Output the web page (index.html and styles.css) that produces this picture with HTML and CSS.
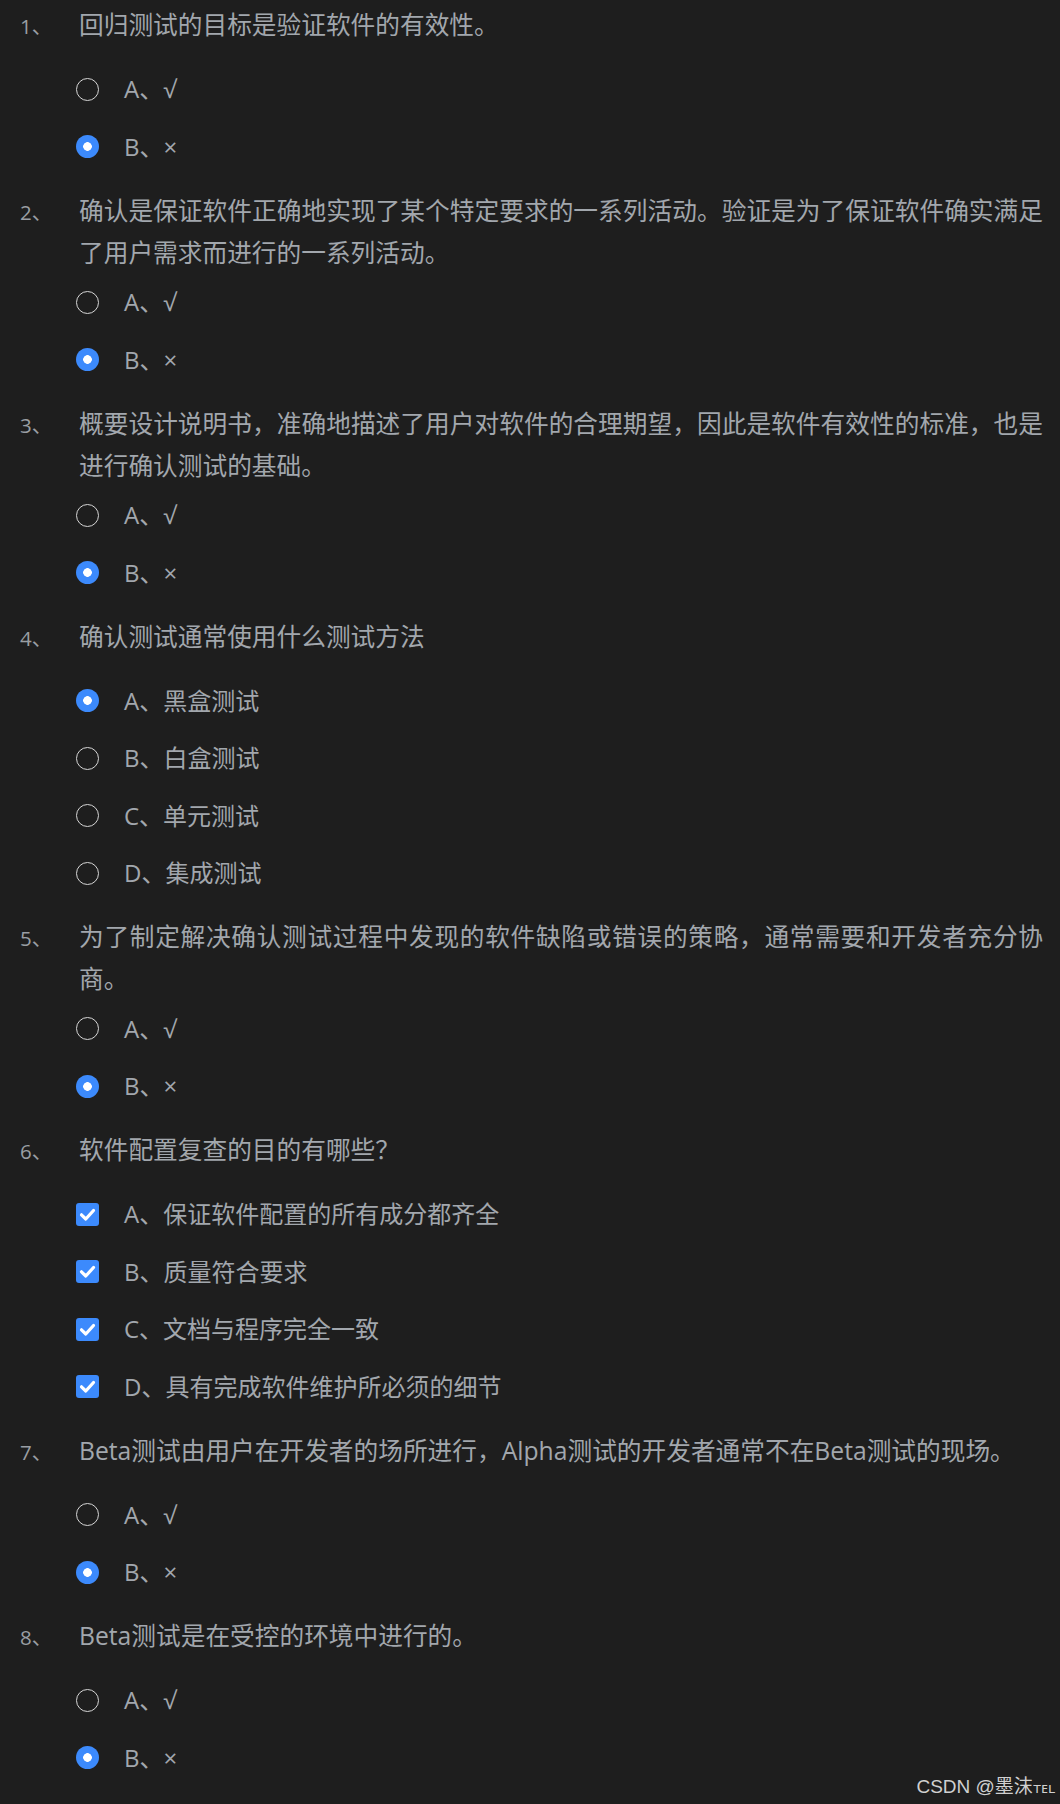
FILE: index.html
```html
<!DOCTYPE html>
<html lang="zh-CN">
<head>
<meta charset="utf-8">
<title>确认测试练习</title>
<link rel="stylesheet" href="styles.css">
</head>
<body>
<div class="quiz">
  <div class="item">
    <div class="q"><span class="num">1、</span><div class="qt">回归测试的目标是验证软件的有效性。</div></div>
    <ul class="opts">
      <li class="opt"><span class="radio"></span><span class="lbl">A、√</span></li>
      <li class="opt"><span class="radio on"></span><span class="lbl">B、×</span></li>
    </ul>
  </div>
  <div class="item">
    <div class="q"><span class="num">2、</span><div class="qt"><span class="l1">确认是保证软件正确地实现了某个特定要求的一系列活动。验证是为了保证软件确实满足</span>了用户需求而进行的一系列活动。</div></div>
    <ul class="opts">
      <li class="opt"><span class="radio"></span><span class="lbl">A、√</span></li>
      <li class="opt"><span class="radio on"></span><span class="lbl">B、×</span></li>
    </ul>
  </div>
  <div class="item">
    <div class="q"><span class="num">3、</span><div class="qt"><span class="l1">概要设计说明书，准确地描述了用户对软件的合理期望，因此是软件有效性的标准，也是</span>进行确认测试的基础。</div></div>
    <ul class="opts">
      <li class="opt"><span class="radio"></span><span class="lbl">A、√</span></li>
      <li class="opt"><span class="radio on"></span><span class="lbl">B、×</span></li>
    </ul>
  </div>
  <div class="item">
    <div class="q"><span class="num">4、</span><div class="qt">确认测试通常使用什么测试方法</div></div>
    <ul class="opts">
      <li class="opt"><span class="radio on"></span><span class="lbl">A、黑盒测试</span></li>
      <li class="opt"><span class="radio"></span><span class="lbl">B、白盒测试</span></li>
      <li class="opt"><span class="radio"></span><span class="lbl">C、单元测试</span></li>
      <li class="opt"><span class="radio"></span><span class="lbl">D、集成测试</span></li>
    </ul>
  </div>
  <div class="item">
    <div class="q"><span class="num">5、</span><div class="qt"><span class="l1">为了制定解决确认测试过程中发现的软件缺陷或错误的策略，通常需要和开发者充分协</span>商。</div></div>
    <ul class="opts">
      <li class="opt"><span class="radio"></span><span class="lbl">A、√</span></li>
      <li class="opt"><span class="radio on"></span><span class="lbl">B、×</span></li>
    </ul>
  </div>
  <div class="item">
    <div class="q"><span class="num">6、</span><div class="qt">软件配置复查的目的有哪些？</div></div>
    <ul class="opts">
      <li class="opt"><span class="check"><svg viewBox="0 0 23 23" width="23" height="23"><polyline points="5.5,11.8 9.8,16 17.5,7.5" fill="none" stroke="#fff" stroke-width="3.2" stroke-linecap="round" stroke-linejoin="round"/></svg></span><span class="lbl">A、保证软件配置的所有成分都齐全</span></li>
      <li class="opt"><span class="check"><svg viewBox="0 0 23 23" width="23" height="23"><polyline points="5.5,11.8 9.8,16 17.5,7.5" fill="none" stroke="#fff" stroke-width="3.2" stroke-linecap="round" stroke-linejoin="round"/></svg></span><span class="lbl">B、质量符合要求</span></li>
      <li class="opt"><span class="check"><svg viewBox="0 0 23 23" width="23" height="23"><polyline points="5.5,11.8 9.8,16 17.5,7.5" fill="none" stroke="#fff" stroke-width="3.2" stroke-linecap="round" stroke-linejoin="round"/></svg></span><span class="lbl">C、文档与程序完全一致</span></li>
      <li class="opt"><span class="check"><svg viewBox="0 0 23 23" width="23" height="23"><polyline points="5.5,11.8 9.8,16 17.5,7.5" fill="none" stroke="#fff" stroke-width="3.2" stroke-linecap="round" stroke-linejoin="round"/></svg></span><span class="lbl">D、具有完成软件维护所必须的细节</span></li>
    </ul>
  </div>
  <div class="item">
    <div class="q"><span class="num">7、</span><div class="qt">Beta测试由用户在开发者的场所进行，Alpha测试的开发者通常不在Beta测试的现场。</div></div>
    <ul class="opts">
      <li class="opt"><span class="radio"></span><span class="lbl">A、√</span></li>
      <li class="opt"><span class="radio on"></span><span class="lbl">B、×</span></li>
    </ul>
  </div>
  <div class="item">
    <div class="q"><span class="num">8、</span><div class="qt">Beta测试是在受控的环境中进行的。</div></div>
    <ul class="opts">
      <li class="opt"><span class="radio"></span><span class="lbl">A、√</span></li>
      <li class="opt"><span class="radio on"></span><span class="lbl">B、×</span></li>
    </ul>
  </div>
</div>
<div class="wm">CSDN @墨沫<span class="sc">ᴛᴇʟ</span></div>
</body>
</html>
```

FILE: styles.css
```css
html, body {
  margin: 0;
  background: #1e1e1e;
}
body {
  position: relative;
  min-height: 1804px;
  font-family: "Open Sans", "Noto Sans CJK SC", sans-serif;
  color: #a2a7ad;
}
.quiz {
  padding: 4px 17px 0 20px;
}
.item {
  margin-bottom: 14px;
}
.q {
  display: flex;
  align-items: baseline;
  min-height: 56.5px;
  font-size: 24.7px;
  line-height: 42px;
}
.num {
  flex: none;
  width: 59px;
  font-size: 20.5px;
  color: #9a9ea3;
}
.qt {
  flex: 1;
  text-align: justify;
}
.l1 {
  display: block;
  text-align-last: justify;
}
.opts {
  list-style: none;
  margin: 0;
  padding: 0 0 0 56px;
}
.opt {
  display: flex;
  align-items: center;
  height: 57.5px;
  font-size: 24px;
  line-height: 36px;
}
.radio {
  flex: none;
  box-sizing: border-box;
  width: 23px;
  height: 23px;
  margin-right: 25px;
  border-radius: 50%;
  border: 1.5px solid #d6d6d6;
}
.radio.on {
  border: none;
  background: radial-gradient(circle, #ffffff 0 4px, #3c8afc 4.6px);
}
.check {
  flex: none;
  display: flex;
  width: 23px;
  height: 23px;
  margin-right: 25px;
  border-radius: 3px;
  background: #3c8afc;
}
.lbl {
  white-space: nowrap;
}
.wm {
  position: absolute;
  right: 5px;
  top: 1774px;
  font-family: "Liberation Sans", "Noto Sans CJK SC", sans-serif;
  font-size: 19px;
  line-height: 26px;
  color: #d0d0d0;
}
.sc {
  font-family: "DejaVu Sans", sans-serif;
  font-size: 14px;
}
```
